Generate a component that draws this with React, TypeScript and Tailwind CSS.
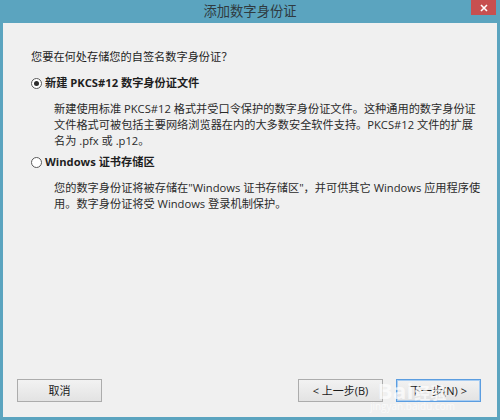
import React from "react";

const font = { fontFamily: '"Open Sans", "Noto Sans CJK SC", sans-serif' };

function Radio({ checked }: { checked?: boolean }) {
  return (
    <span className="flex h-[11px] w-[11px] shrink-0 items-center justify-center rounded-full border border-[#5a5a5a] bg-white">
      {checked && <span className="h-[5px] w-[5px] rounded-full bg-[#2b2b2b]" />}
    </span>
  );
}

function WinButton({ children, focused }: { children: React.ReactNode; focused?: boolean }) {
  return (
    <button
      className={`flex h-[23px] w-[85px] items-center justify-center border bg-gradient-to-b from-[#f2f2f2] to-[#e3e3e3] text-[11px] text-[#1a1a1a] ${
        focused ? "border-[#5b9de0] shadow-[inset_0_0_0_1px_#a8cdf2]" : "border-[#acacac]"
      }`}
    >
      {children}
    </button>
  );
}

export default function App() {
  return (
    <div className="flex h-[420px] w-[500px] flex-col bg-[#5ba4bf]" style={font}>
      {/* Title bar */}
      <div className="relative flex h-[23px] shrink-0 items-center justify-center">
        <span className="text-[13.3px] leading-none text-[#2f3a40]">添加数字身份证</span>
        <div className="absolute right-[4px] top-0 flex h-[15px] w-[25px] items-center justify-center bg-[#c75050]">
          <svg width="8" height="8" viewBox="0 0 8 8">
            <path d="M1 1 L7 7 M7 1 L1 7" stroke="white" strokeWidth="1.6" />
          </svg>
        </div>
      </div>

      {/* Client area */}
      <div className="relative mx-[3px] mb-[3px] flex flex-1 flex-col bg-[#f0f0f0] px-[28px] pt-[26px] pb-[15px] text-[11.2px] leading-[16px] text-[#1e1e1e]">
        <p>您要在何处存储您的自签名数字身份证？</p>

        <div className="mt-[10px] flex items-center gap-[3px]">
          <Radio checked />
          <span className="font-bold">新建 PKCS#12 数字身份证文件</span>
        </div>
        <p className="mt-[10px] whitespace-nowrap pl-[23px] text-[#2a2a2a]">
          新建使用标准 PKCS#12 格式并受口令保护的数字身份证文件。这种通用的数字身份证
          <br />
          文件格式可被包括主要网络浏览器在内的大多数安全软件支持。PKCS#12 文件的扩展
          <br />
          名为 .pfx 或 .p12。
        </p>

        <div className="mt-[5px] flex items-center gap-[3px]">
          <Radio />
          <span className="font-bold">Windows 证书存储区</span>
        </div>
        <p className="mt-[10px] whitespace-nowrap pl-[23px] text-[#2a2a2a]">
          您的数字身份证将被存储在"Windows 证书存储区"，并可供其它 Windows 应用程序使
          <br />
          用。数字身份证将受 Windows 登录机制保护。
        </p>

        <div className="mt-auto flex items-center -ml-[14px] -mr-[12px]">
          <WinButton>取消</WinButton>
          <div className="flex-1" />
          <WinButton>&lt; 上一步(B)</WinButton>
          <div className="w-[13px]" />
          <WinButton focused>下一步(N) &gt;</WinButton>
        </div>

        {/* watermark */}
        <div className="pointer-events-none absolute bottom-[6px] right-[42px] flex flex-col items-center text-white/70">
          <span className="text-[22px] leading-none font-bold tracking-wide">Bai<span className="text-[16px]">经验</span></span>
          <span className="text-[10px] leading-none">jingyan.baidu.com</span>
        </div>
      </div>
    </div>
  );
}
